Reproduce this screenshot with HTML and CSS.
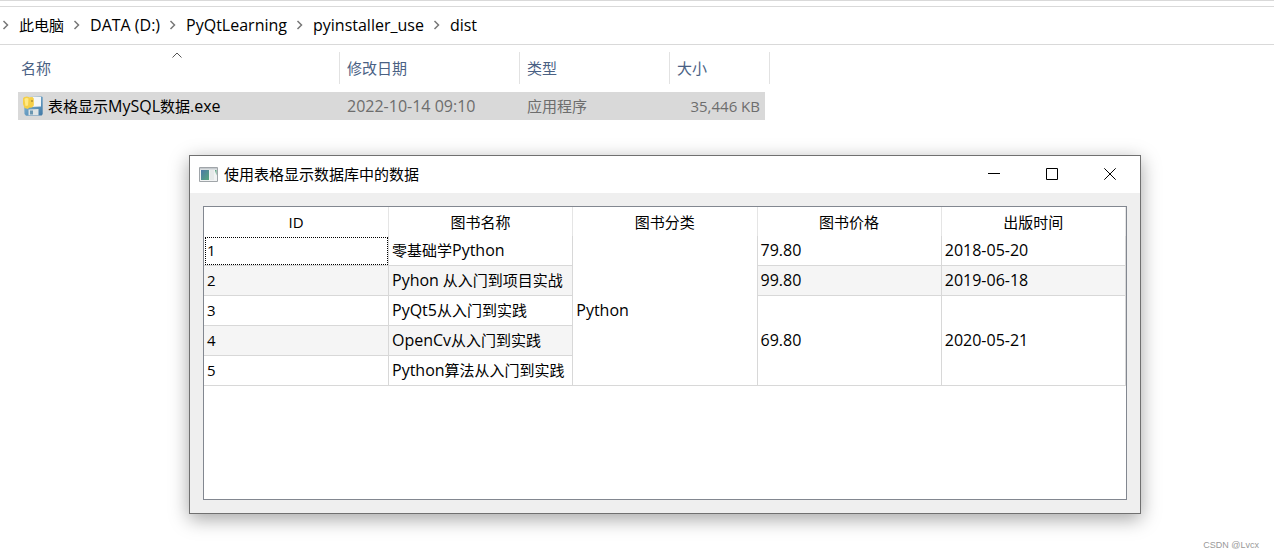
FILE: index.html
```html
<!DOCTYPE html>
<html lang="zh-CN">
<head>
<meta charset="utf-8">
<title>dist</title>
<link rel="stylesheet" href="styles.css">
</head>
<body>
<main class="explorer">
  <div class="ribbon-edge"></div>
  <nav class="address" aria-label="路径">
    <svg class="sep" viewBox="0 0 8 10"><path d="M1.500 1l4 4-4 4"/></svg>
    <a href="#">此电脑</a>
    <svg class="sep" viewBox="0 0 8 10"><path d="M1.500 1l4 4-4 4"/></svg>
    <a class="latin" href="#">DATA (D:)</a>
    <svg class="sep" viewBox="0 0 8 10"><path d="M1.500 1l4 4-4 4"/></svg>
    <a class="latin" href="#">PyQtLearning</a>
    <svg class="sep" viewBox="0 0 8 10"><path d="M1.500 1l4 4-4 4"/></svg>
    <a class="latin" href="#">pyinstaller_use</a>
    <svg class="sep" viewBox="0 0 8 10"><path d="M1.500 1l4 4-4 4"/></svg>
    <a class="latin" href="#">dist</a>
  </nav>
  <table class="files">
    <colgroup><col class="c-name"><col class="c-date"><col class="c-type"><col class="c-size"></colgroup>
    <thead>
      <tr>
        <th scope="col" class="sorted">名称<svg class="sort" viewBox="0 0 10 6"><path d="M.5 5.500L5 1l4.500 4.500"/></svg></th>
        <th scope="col">修改日期</th>
        <th scope="col">类型</th>
        <th scope="col">大小</th>
      </tr>
    </thead>
    <tbody>
      <tr>
        <td><div class="file">
          <svg class="file-icon" viewBox="0 0 20 20">
            <defs><linearGradient id="disk" x1="0" y1="0" x2="1" y2="1"><stop offset="0" stop-color="#8fc0de"/><stop offset="1" stop-color="#3f78a5"/></linearGradient></defs>
            <path d="M1 3l2-2 16-.5.7 1V18l-1 1.500-15.700.3L1.500 18z" fill="url(#disk)"/>
            <path d="M6 1h12v9.500L6 11z" fill="#f4f7f8"/>
            <path d="M5.500 13.500l10-.5v6.200H5.500z" fill="#dfe4e5"/>
            <path d="M7 14.500h3v4H7z" fill="#6c97b1"/>
            <path d="M0 2.500C1 .7 4 0 6 1.200L9.500 1l1.300 1.500v7L9 11.500l-3 .3-1 1.200-3.500-1L0 8z" fill="#f5cf48"/>
            <path d="M1.500 3c1-1.300 3-1.300 4-.5L5 9.500 2.500 10z" fill="#ffe986"/>
            <path d="M8.500 4h1v2h-1z" fill="#8c722b"/>
          </svg>
          <span>表格显示<span class="latin">MySQL</span>数据<span class="latin">.exe</span></span>
        </div></td>
        <td class="latin">2022-10-14 09:10</td>
        <td>应用程序</td>
        <td class="size">35,446 KB</td>
      </tr>
    </tbody>
  </table>
</main>

<section class="dialog" role="dialog" aria-labelledby="dialog-title">
  <header class="titlebar">
    <svg class="app-icon" viewBox="0 0 19 15">
      <defs><linearGradient id="pane" x1="0" y1="0" x2="1" y2="1"><stop offset="0" stop-color="#4c78a8"/><stop offset="1" stop-color="#58a67c"/></linearGradient></defs>
      <path d="M.5.500h18v14H.5z" fill="#f1f3f3" stroke="#a0a5a9"/>
      <path d="M1 1h17v1.500H1z" fill="#c5cace"/>
      <path d="M2 3h8v10H2z" fill="url(#pane)"/>
      <path d="M11 3h4v10h-4z" fill="#e6e9e9"/>
      <path d="M16 3h1.500v5.500z" fill="#4f9b78"/>
    </svg>
    <h1 id="dialog-title">使用表格显示数据库中的数据</h1>
    <button type="button" aria-label="最小化"><svg viewBox="0 0 12 12"><path d="M0 5.500h12"/></svg></button>
    <button type="button" aria-label="最大化"><svg viewBox="0 0 12 12"><path d="M.5.500h11v11H.5z"/></svg></button>
    <button type="button" aria-label="关闭"><svg viewBox="0 0 12 12"><path d="M.3.300l11.400 11.400M11.700.300L.3 11.700"/></svg></button>
  </header>
  <div class="content">
    <div class="view">
      <table class="books">
        <colgroup><col class="c-id"><col><col><col><col></colgroup>
        <thead>
          <tr><th scope="col">ID</th><th scope="col">图书名称</th><th scope="col">图书分类</th><th scope="col">图书价格</th><th scope="col">出版时间</th></tr>
        </thead>
        <tbody>
          <tr><td class="current">1</td><td>零基础学<span class="latin">Python</span></td><td class="latin" rowspan="5">Python</td><td class="latin">79.80</td><td class="latin">2018-05-20</td></tr>
          <tr class="alt"><td>2</td><td><span class="latin">Pyhon</span> 从入门到项目实战</td><td class="latin">99.80</td><td class="latin">2019-06-18</td></tr>
          <tr><td>3</td><td><span class="latin">PyQt5</span>从入门到实践</td><td class="latin" rowspan="3">69.80</td><td class="latin" rowspan="3">2020-05-21</td></tr>
          <tr class="alt"><td>4</td><td><span class="latin">OpenCv</span>从入门到实践</td></tr>
          <tr><td>5</td><td><span class="latin">Python</span>算法从入门到实践</td></tr>
        </tbody>
      </table>
    </div>
  </div>
</section>
<footer class="credit">CSDN @Lvcx</footer>
</body>
</html>
```
FILE: styles.css
```css
* { box-sizing: border-box; }

body {
  display: flex;
  flex-direction: column;
  min-height: 100vh;
  margin: 0;
  background: #fff;
  color: #000;
  font: 15px/20px "Open Sans", "Noto Sans CJK SC", sans-serif;
}

svg { display: block; flex: none; fill: none; }

table { border-spacing: 0; table-layout: fixed; }

th, td { padding: 0; font-weight: 400; text-align: left; }

.latin { font-size: 16px; }

.explorer { flex: 1; }

.ribbon-edge {
  height: 7px;
  border-top: 1px solid #d9d9d9;
  border-bottom: 1px solid #d9d9d9;
}

.address {
  display: flex;
  align-items: center;
  gap: 9px;
  height: 38px;
  padding: 0 0 2px 2px;
  border-bottom: 1px solid #d9d9d9;
}

.address a { color: #000; text-decoration: none; white-space: nowrap; }

.sep { width: 8px; height: 10px; stroke: #777; stroke-width: 1.5; }

.files { width: 752px; margin: 7px 0 0 18px; }

.c-name { width: 322px; }
.c-date { width: 180px; }
.c-type { width: 150px; }
.c-size { width: 100px; }

.files th {
  height: 32px;
  padding-left: 7px;
  border-right: 1px solid #e2e2e2;
  color: #4a6184;
}

.files th.sorted { position: relative; padding-left: 3px; }

.sort {
  position: absolute;
  top: 0;
  left: 154px;
  width: 10px;
  height: 6px;
  stroke: #555;
}

.files tbody::before { content: ""; display: block; height: 8px; }

.files td {
  height: 28px;
  padding-left: 7px;
  background: #d9d9d9;
  color: #6d6d6d;
}

.files td:first-child { padding-left: 5px; color: #000; }

.files td.size {
  padding-right: 5px;
  border-right: 5px solid #fff;
  text-align: right;
}

.file { display: flex; align-items: center; gap: 5px; }

.file-icon { width: 20px; height: 20px; }

.dialog {
  position: absolute;
  top: 155px;
  right: 133px;
  left: 189px;
  border: 1px solid #707070;
  background: #efefef;
  box-shadow: 0 5px 18px rgba(0, 0, 0, .36);
}

.titlebar {
  display: flex;
  align-items: stretch;
  height: 37px;
  padding: 0 1px 1px 9px;
  background: #fff;
}

.titlebar h1 {
  flex: 1;
  margin: 0 0 0 6px;
  font-size: 15px;
  font-weight: 400;
  line-height: 36px;
}

.app-icon { align-self: center; width: 19px; height: 15px; }

.titlebar button {
  display: grid;
  place-items: center;
  width: 58px;
  padding: 0;
  border: 0;
  background: none;
}

.titlebar button svg { width: 12px; height: 12px; stroke: #000; }

.content { padding: 13px; }

.view {
  min-height: 294px;
  border: 1px solid #828790;
  background: #fff;
}

.books { width: 100%; }

.c-id { width: 185px; }

.books th {
  height: 29px;
  border-right: 1px solid #e5e5e5;
  text-align: center;
}

.books td {
  height: 30px;
  padding: 0 3px 2px;
  border-right: 1px solid #d8d8d8;
  border-bottom: 1px solid #d8d8d8;
}

.books .alt td { background: #f5f5f5; }

.books .current { outline: 1px dotted #000; outline-offset: -2px; }

.credit {
  padding: 0 15px 3px 0;
  color: #999;
  font: 9px/20px "Liberation Sans", sans-serif;
  text-align: right;
}
```
